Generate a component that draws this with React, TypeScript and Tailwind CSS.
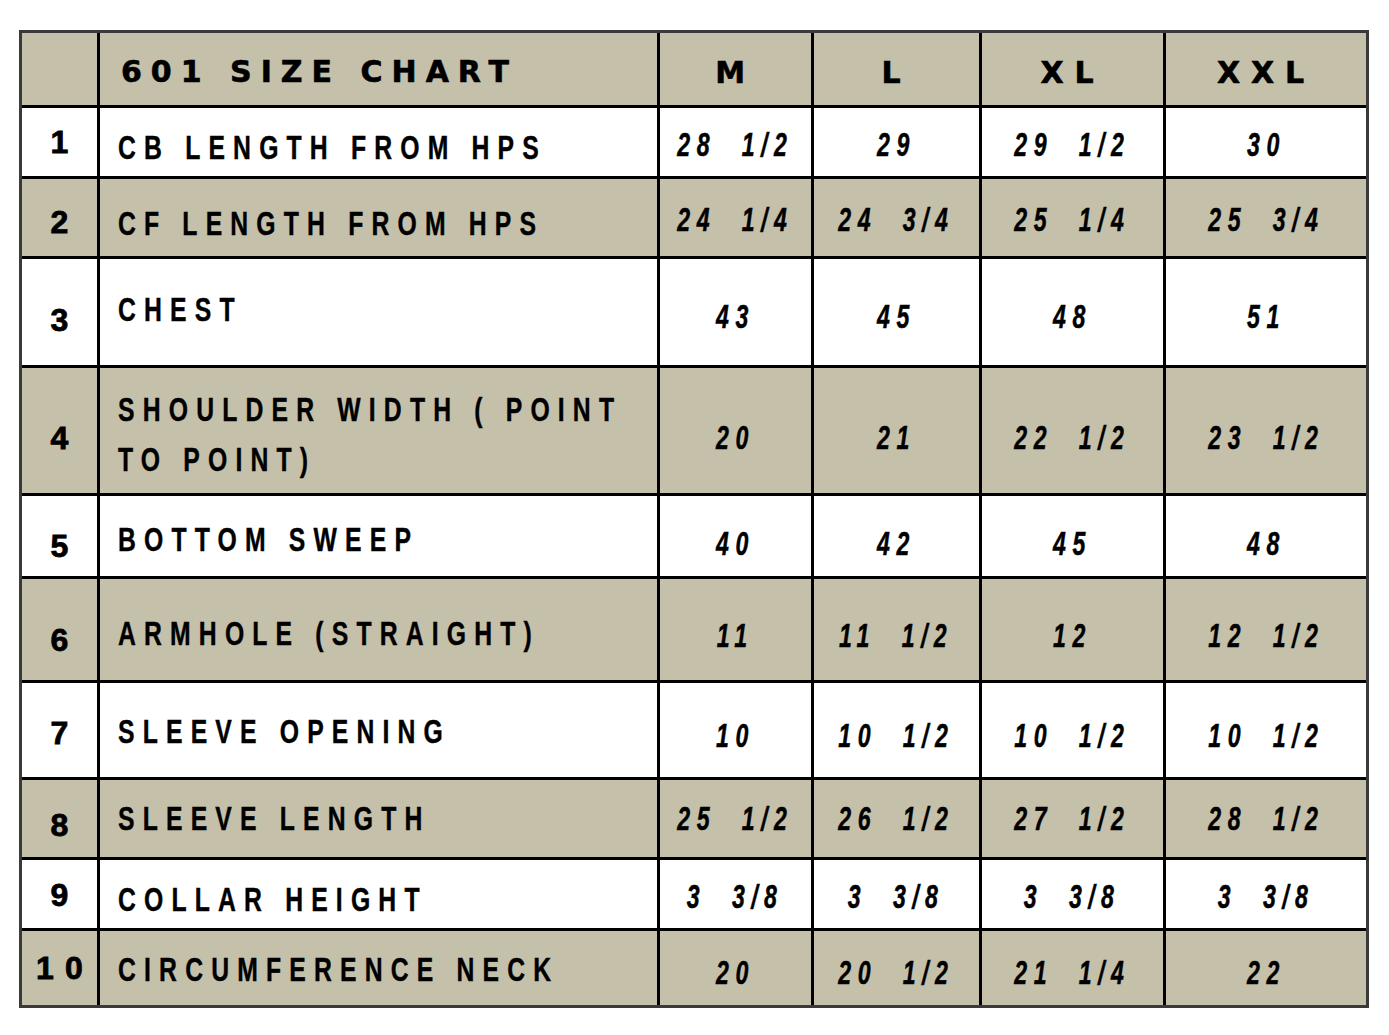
type Row = {
  n: string
  label: React.ReactNode
  vals: string[]
  tan: boolean
  h: string
  np: string // nudge for the row number
  lp: string // nudge for the label
  vp: string // nudge for the values
}

const rows: Row[] = [
  { n: '1', label: 'CB LENGTH FROM HPS', vals: ['28 1/2', '29', '29 1/2', '30'], tan: false, h: 'h-[68px]', np: 'pt-[0px]', lp: 'pt-[12px]', vp: 'pt-[4px]' },
  { n: '2', label: 'CF LENGTH FROM HPS', vals: ['24 1/4', '24 3/4', '25 1/4', '25 3/4'], tan: true, h: 'h-[77px]', np: 'pt-[9px]', lp: 'pt-[13px]', vp: 'pt-[3px]' },
  { n: '3', label: 'CHEST', vals: ['43', '45', '48', '51'], tan: false, h: 'h-[106px]', np: 'pt-[16px]', lp: 'pb-[4px]', vp: 'pt-[8px]' },
  {
    n: '4',
    label: (
      <>
        SHOULDER WIDTH ( POINT
        <br />
        TO POINT)
      </>
    ),
    vals: ['20', '21', '22 1/2', '23 1/2'],
    tan: true,
    h: 'h-[125px]',
    np: 'pt-[15px]',
    lp: 'pt-[9px]',
    vp: 'pt-[13px]',
  },
  { n: '5', label: 'BOTTOM SWEEP', vals: ['40', '42', '45', '48'], tan: false, h: 'h-[80px]', np: 'pt-[20px]', lp: 'pt-[8px]', vp: 'pt-[14px]' },
  { n: '6', label: 'ARMHOLE (STRAIGHT)', vals: ['11', '11 1/2', '12', '12 1/2'], tan: true, h: 'h-[101px]', np: 'pt-[21px]', lp: 'pt-[9px]', vp: 'pt-[11px]' },
  { n: '7', label: 'SLEEVE OPENING', vals: ['10', '10 1/2', '10 1/2', '10 1/2'], tan: false, h: 'h-[94px]', np: 'pt-[6px]', lp: 'pt-[4px]', vp: 'pt-[10px]' },
  { n: '8', label: 'SLEEVE LENGTH', vals: ['25 1/2', '26 1/2', '27 1/2', '28 1/2'], tan: true, h: 'h-[77px]', np: 'pt-[13px]', lp: 'pt-[0px]', vp: 'pt-[0px]' },
  { n: '9', label: 'COLLAR HEIGHT', vals: ['3 3/8', '3 3/8', '3 3/8', '3 3/8'], tan: false, h: 'h-[68px]', np: 'pt-[2px]', lp: 'pt-[12px]', vp: 'pt-[4px]' },
  { n: '10', label: 'CIRCUMFERENCE NECK', vals: ['20', '20 1/2', '21 1/4', '22'], tan: true, h: 'h-[74px]', np: 'pt-[0px]', lp: 'pt-[4px]', vp: 'pt-[8px]' },
]

const sans = "font-['Liberation_Sans',Arial,sans-serif]"

export default function App() {
  return (
    <div className="min-h-screen bg-white pt-[30px] pl-[19px]">
      <div className="w-[1350px] border-[3px] border-[#3a3a3a] bg-black">
        <div className="grid grid-cols-[75px_557px_151px_165px_181px_200px] gap-[3px]">
          {/* header row */}
          <div className="h-[72px] bg-[#c5c0a9]" />
          <div className="flex h-[72px] items-center bg-[#c5c0a9] pl-[21px] pt-[4px]">
            <span className="font-['DejaVu_Sans',sans-serif] text-[30px] font-bold tracking-[0.3em] text-black [-webkit-text-stroke:0.6px_black]">
              601 SIZE CHART
            </span>
          </div>
          {['M', 'L', 'XL', 'XXL'].map((s) => (
            <div key={s} className="flex h-[72px] items-center justify-center bg-[#c5c0a9] pt-[6px]">
              <span className="font-['DejaVu_Sans',sans-serif] text-[30px] font-bold tracking-[0.36em] text-black [-webkit-text-stroke:0.6px_black]">
                {s}
              </span>
            </div>
          ))}

          {rows.map((r) => {
            const bg = r.tan ? 'bg-[#c5c0a9]' : 'bg-white'
            return (
              <div key={r.n} className="contents">
                <div className={`flex ${r.h} items-center justify-center ${bg} ${r.np}`}>
                  <span
                    className={`${sans} pl-[0.35em] text-[32px] font-bold tracking-[0.35em] text-black [-webkit-text-stroke:0.8px_black]`}
                  >
                    {r.n}
                  </span>
                </div>
                <div className={`flex ${r.h} items-center ${bg} pl-[18px] ${r.lp}`}>
                  <span
                    className={`${sans} inline-block origin-left scale-x-[0.75] whitespace-nowrap text-[33px] font-bold leading-[50px] tracking-[0.33em] text-black [-webkit-text-stroke:0.4px_black]`}
                  >
                    {r.label}
                  </span>
                </div>
                {r.vals.map((v, i) => (
                  <div key={i} className={`flex ${r.h} items-center justify-center ${bg} ${r.vp}`}>
                    <span
                      className={`${sans} inline-block scale-x-[0.68] whitespace-pre text-[34px] font-bold italic tracking-[0.28em] text-black [-webkit-text-stroke:0.5px_black]`}
                    >
                      {v.replace(' ', '  ')}
                    </span>
                  </div>
                ))}
              </div>
            )
          })}
        </div>
      </div>
    </div>
  )
}
